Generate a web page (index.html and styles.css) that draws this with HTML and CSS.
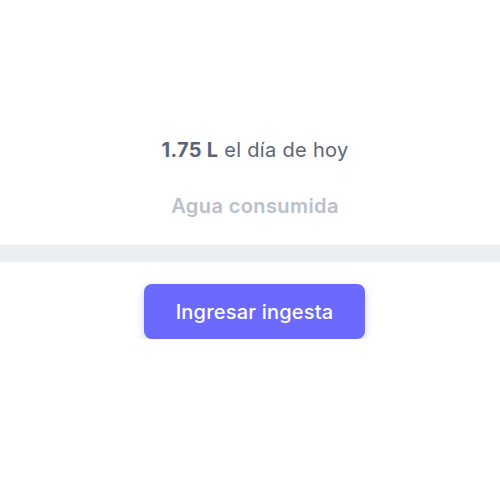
FILE: index.html
```html
<!DOCTYPE html>
<html>
<head>
<meta charset="utf-8">
<link rel="stylesheet" href="styles.css">
</head>
<body>
<div class="page">
  <div class="stats">
    <p class="amount"><strong>1.75 L</strong> el día de hoy</p>
    <p class="label">Agua consumida</p>
  </div>
  <div class="divider"></div>
  <div class="actions">
    <button class="btn">Ingresar ingesta</button>
  </div>
</div>
</body>
</html>
```
FILE: styles.css
```css
html, body {
  margin: 0;
  padding: 0;
  background: #ffffff;
  font-family: "Inter", "Noto Sans", sans-serif;
}
.page {
  display: flex;
  flex-direction: column;
}
.stats {
  display: flex;
  flex-direction: column;
  align-items: center;
  padding-top: 137px;
  padding-left: 10px;
}
.amount {
  margin: 0;
  font-size: 20px;
  line-height: 26px;
  letter-spacing: 0.3px;
  color: #5b6579;
}
.amount strong {
  font-weight: 700;
}
.label {
  margin: 30px 0 0 0;
  font-size: 20px;
  line-height: 26px;
  letter-spacing: 0.4px;
  font-weight: 600;
  color: #b9c0ca;
}
.divider {
  margin-top: 26px;
  height: 17px;
  background: #ecedf1;
}
.actions {
  display: flex;
  justify-content: center;
  padding-top: 22px;
  padding-left: 9px;
}
.btn {
  width: 221px;
  height: 55px;
  border: none;
  border-radius: 8px;
  background: #6b69fe;
  color: #ffffff;
  font-family: "Inter", "Noto Sans", sans-serif;
  font-size: 20px;
  font-weight: 500;
  letter-spacing: 0.2px;
  box-shadow: 0 3px 8px rgba(107, 105, 254, 0.3);
}
```
